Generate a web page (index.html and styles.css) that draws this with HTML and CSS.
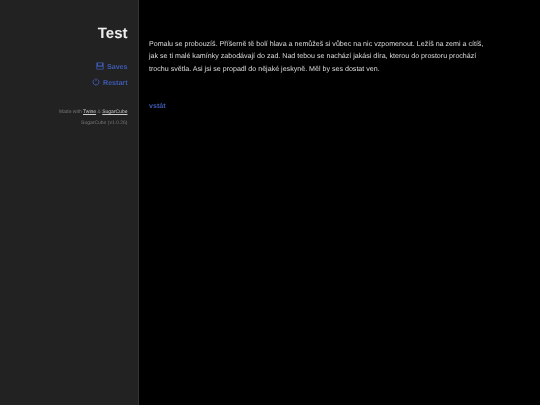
FILE: index.html
```html
<!DOCTYPE html>
<html lang="cs">
<head>
    <meta charset="UTF-8">
    <title>Test</title>
    <link rel="stylesheet" href="styles.css">
</head>
<body>
    <div class="ui-bar">
        <h1 class="story-title">Test</h1>
        <ul class="menu">
            <li>
                <a href="#">
                    <svg class="icon" viewBox="0 0 10 10"><path d="M1 .5h8a.5.5 0 0 1 .5.5v8a.5.5 0 0 1-.5.5H1a.5.5 0 0 1-.5-.5V1A.5.5 0 0 1 1 .5zM2.5 1.5v2.8h5V1.5zM1.5 6v2.5h7V6z" fill-rule="evenodd"/></svg>
                    Saves
                </a>
            </li>
            <li>
                <a href="#">
                    <svg class="icon" viewBox="0 0 10 10"><path class="stroke" d="M3 1.9a3.7 3.7 0 1 0 4 0M5 .4v3.4"/></svg>
                    Restart
                </a>
            </li>
        </ul>
        <p class="credits">Made with <a href="#">Twine</a> &amp; <a href="#">SugarCube</a></p>
        <p class="version">SugarCube (v1.0.26)</p>
    </div>
    <div class="passage">
        <p>Pomalu se probouzíš. Příšerně tě bolí hlava a nemůžeš si vůbec na nic vzpomenout. Ležíš na zemi a cítíš, jak se ti malé kamínky zabodávají do zad. Nad tebou se nachází jakási díra, kterou do prostoru prochází trochu světla. Asi jsi se propadl do nějaké jeskyně. Měl by ses dostat ven.</p>
        <a class="link" href="#">vstát</a>
    </div>
</body>
</html>
```
FILE: styles.css
```css
html, body {
    height: 100%;
}
body {
    margin: 0;
    display: flex;
    background-color: #000;
    color: #ddd;
    font-family: "Liberation Sans", Arial, sans-serif;
    text-rendering: geometricPrecision;
    overflow: hidden;
}
.ui-bar {
    box-sizing: border-box;
    width: 139px;
    padding: 25px 10.5px 0 12px;
    background-color: #222;
    border-right: 1px solid #333;
    text-align: right;
}
.story-title {
    margin: 0 0 16px 0;
    font-size: 15px;
    line-height: 18px;
    font-weight: bold;
    color: #eee;
    will-change: opacity;
}
.menu {
    margin: 0;
    padding: 0;
    list-style: none;
    will-change: opacity;
}
.menu li {
    height: 16px;
    line-height: 16px;
    font-size: 7.1px;
    font-weight: bold;
}
.menu a {
    color: #3f5bb5;
    text-decoration: none;
}
.icon {
    width: 8px;
    height: 8px;
    margin-right: 1.5px;
    vertical-align: -1px;
    fill: #3f5bb5;
}
.stroke {
    fill: none;
    stroke: #3f5bb5;
    stroke-width: 1.2;
}
.credits, .version {
    margin: 0;
    font-size: 5px;
    line-height: 11px;
    color: #777;
    will-change: opacity;
}
.credits {
    margin-top: 16px;
}
.credits a {
    color: #ccc;
}
.passage {
    flex: 1;
    padding: 37.5px 52px 0 10px;
    font-size: 7.1px;
    line-height: 12.5px;
    will-change: opacity;
}
.passage p {
    margin: 0 0 24.5px 0;
}
.link {
    color: #3f5bb5;
    font-weight: bold;
    text-decoration: none;
}
```
